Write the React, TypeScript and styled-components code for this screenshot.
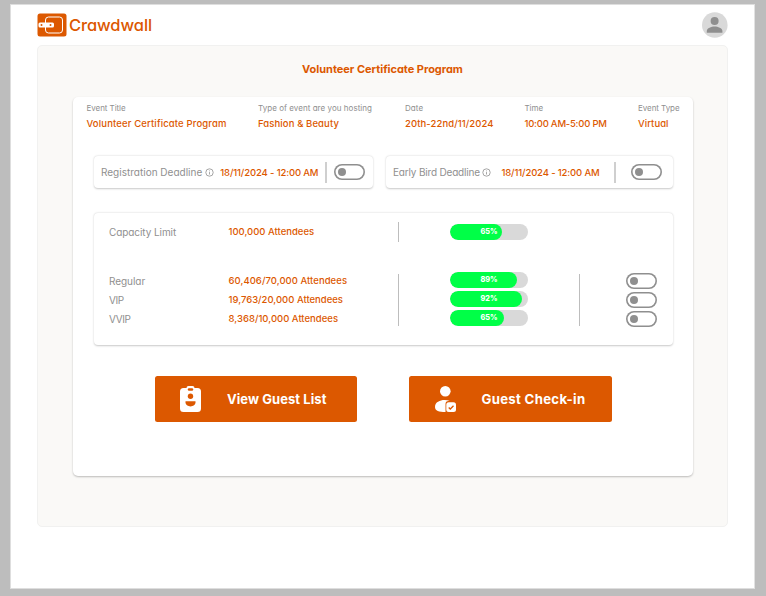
import React from "react";
import styled, { createGlobalStyle } from "styled-components";

const orange = "#dc5800";
const grey = "#8f8f8f";

const Global = createGlobalStyle`
  * { box-sizing: border-box; }
  body { margin: 0; background: #bdbdbd; font-family: Inter, "Open Sans", sans-serif; font-feature-settings: "cv11"; }
`;

const Sheet = styled.div`
  width: 745px; height: 585px; margin: 4px 0 0 10px; background: #fff;
  border: 1px solid #dedede; border-right-color: #e2e2e2;
  padding: 0 26px;
`;
const Header = styled.header`
  height: 40px; display: flex; align-items: center; justify-content: space-between;
`;
const Brand = styled.div`display: flex; align-items: center; gap: 2px;`;
const Panel = styled.main`
  width: 691px; height: 482px; background: #faf9f7; border: 1px solid #f1f1f0; border-radius: 5px;
  display: flex; flex-direction: column; align-items: center;
`;
const TitleBar = styled.div`height: 51px; padding-top: 11px;`;
const Card = styled.section`
  width: 620px; height: 379px; background: #fff; border-radius: 5px;
  box-shadow: 0 1px 2px rgba(0, 0, 0, .25);
  padding: 5px 0 0 14px;
`;
const Txt = styled.span<{ $s?: number; $w?: number; $ls?: number; $c?: string; $lh?: number }>`
  display: inline-block; white-space: nowrap; font-size: ${p => p.$s ?? 9.5}px; font-weight: ${p => p.$w ?? 500};
  letter-spacing: ${p => p.$ls ?? 0}px; color: ${p => p.$c ?? orange}; line-height: ${p => p.$lh ?? 20}px;
`;
const Label = styled(Txt).attrs({ $s: 10, $w: 400, $c: grey })``;
const Facts = styled.div`display: grid; grid-template-columns: 171.5px 147px 119.5px 113.5px auto; height: 54px;`;
const Fact = styled.div`display: flex; flex-direction: column; align-items: flex-start;`;
const Deadlines = styled.div`display: flex; gap: 13px; margin: 0 0 25px 7px;`;
const Raised = styled.div`background: #fff; border-radius: 4px; box-shadow: 0 0.5px 2px rgba(0, 0, 0, .22);`;
const Deadline = styled(Raised)<{ $w: number }>`
  width: ${p => p.$w}px; height: 32px; padding-left: 7.5px; display: flex; align-items: center;
`;
const Rule = styled.i<{ $h: number; $wide?: boolean }>`
  width: ${p => (p.$wide ? 1.5 : 1)}px; height: ${p => p.$h}px; background: ${p => (p.$wide ? "#cfcfcf" : "#bdbdbd")};
  flex: none;
`;
const Toggle = styled.button`
  width: 31px; height: 16px; padding: 0 0 0 4px; border: 0; border-radius: 8px; background: #fff;
  box-shadow: inset 0 0 0 1.6px ${grey};
  display: flex; align-items: center; flex: none;
  &::before { content: ""; width: 8px; height: 8px; border-radius: 50%; background: ${grey}; }
`;
const Info = styled.svg`margin-left: 2.5px; flex: none;`;
const Spacer = styled.div<{ $w: number }>`width: ${p => p.$w}px; flex: none;`;

const Capacity = styled(Raised)`
  width: 579px; height: 132px; margin-left: 7px; padding: 9px 0 0 15.5px;
  display: flex; flex-direction: column; gap: 29px;
`;
const Group = styled.div`
  display: grid; grid-template-columns: 119.5px 169.5px 52px 129px 47px auto; align-items: center;
`;
const Tiers = styled(Group)`
  align-items: start;
  & > ${Rule} { margin-top: 3px; }
`;
const Col = styled.div<{ $top?: number }>`
  display: flex; flex-direction: column; gap: 3px; padding-top: ${p => p.$top ?? 1}px; align-items: flex-start;
`;
const Track = styled.div`
  width: 78px; height: 16px; border-radius: 8px; background: #d9d9d9; display: grid; overflow: hidden; align-items: center;
  & > * { grid-area: 1 / 1; }
`;
const Fill = styled.div<{ $w: number }>`width: ${p => p.$w}px; height: 16px; border-radius: 8px; background: #00ff47;`;
const Pct = styled(Txt)`text-align: center;`;
const Actions = styled.div`display: flex; gap: 52px; margin: 31px 0 0 68px;`;
const Action = styled.button`
  width: 202.5px; height: 46px; border: 0; border-radius: 2.5px; background: ${orange}; padding: 0 0 0 24.5px;
  display: flex; align-items: center; gap: 24px; font-family: inherit; font-feature-settings: inherit;
`;

const InfoIcon = () => (
  <Info width="9" height="9" viewBox="0 0 9 9" fill="none" stroke={grey} strokeWidth=".8">
    <circle cx="4.5" cy="4.5" r="3.7" />
    <path d="M4.5 4.1v2.4M4.5 2.5v.8" />
  </Info>
);

const Bar = ({ fill, label }: { fill: number; label: string }) => (
  <Track>
    <Fill $w={fill} />
    <Pct $s={7.3} $w={800} $c="#fff" $lh={16}>{label}</Pct>
  </Track>
);

const facts: { label: string; labelLs: number; value: string; valueLs: number }[] = [
  { label: "Event Title", labelLs: -0.06, value: "Volunteer Certificate Program", valueLs: 0.14 },
  { label: "Type of event are you hosting", labelLs: 0.04, value: "Fashion & Beauty", valueLs: 0.1 },
  { label: "Date", labelLs: 0.1, value: "20th-22nd/11/2024", valueLs: 0.07 },
  { label: "Time", labelLs: -0.05, value: "10:00 AM-5:00 PM", valueLs: -0.23 },
  { label: "Event Type", labelLs: -0.06, value: "Virtual", valueLs: 0.045 },
];

export default function App() {
  return (
    <>
      <Global />
      <Sheet>
        <Header>
          <Brand>
            <svg width="30" height="24" viewBox="0 0 30 24" fill="none">
              <rect x=".5" y=".5" width="29" height="23" rx="2.5" fill={orange} />
              <rect x="8.5" y="4" width="17" height="16" rx="3" stroke="#fff" strokeWidth="1" />
              <rect x="1.5" y="9.5" width="15.5" height="5" rx="1.5" fill="#fff" />
              <circle cx="4.5" cy="12" r="1" fill={orange} />
              <circle cx="13.5" cy="12" r="1" fill={orange} />
            </svg>
            <Txt $s={16.5} $ls={-0.1} $lh={22}>Crawdwall</Txt>
          </Brand>
          <svg width="26" height="26" viewBox="0 0 26 26">
            <circle cx="12.800" cy="13" r="12.800" fill="#d9d9d9" />
            <circle cx="12.600" cy="9" r="4" fill={grey} />
            <path d="M4.800 20.700v-1.600c0-3 4.600-4.600 7.800-4.600s7.800 1.600 7.800 4.600v1.600z" fill={grey} />
          </svg>
        </Header>
        <Panel>
          <TitleBar><Txt $s={11} $w={650} $ls={-0.03}>Volunteer Certificate Program</Txt></TitleBar>
          <Card>
            <Facts>
              {facts.map(f => (
                <Fact key={f.label}>
                  <Txt $s={8} $w={400} $ls={f.labelLs} $c={grey} $lh={12}>{f.label}</Txt>
                  <Txt $ls={f.valueLs}>{f.value}</Txt>
                </Fact>
              ))}
            </Facts>
            <Deadlines>
              <Deadline $w={279}>
                <Label $lh={21}>Registration Deadline</Label><InfoIcon /><Spacer $w={6.5} />
                <Txt $ls={-0.14} $lh={21}>18/11/2024 - 12:00 AM</Txt>
                <Spacer $w={7} /><Rule $h={21} $wide /><Spacer $w={7} /><Toggle />
              </Deadline>
              <Deadline $w={287}>
                <Label $ls={-0.18} $lh={21}>Early Bird Deadline</Label><InfoIcon /><Spacer $w={10} />
                <Txt $ls={-0.14} $lh={21}>18/11/2024 - 12:00 AM</Txt>
                <Spacer $w={14.5} /><Rule $h={21} $wide /><Spacer $w={15.5} /><Toggle />
              </Deadline>
            </Deadlines>
            <Capacity>
              <Group>
                <Label $ls={-0.08}>Capacity Limit</Label>
                <Txt>100,000 Attendees</Txt>
                <Rule $h={20} />
                <Bar fill={52} label="65%" />
              </Group>
              <Tiers>
                <Col $top={2}>
                  <Label $ls={-0.05} $lh={16}>Regular</Label>
                  <Label $ls={-0.4} $lh={16}>VIP</Label>
                  <Label $ls={-0.4} $lh={16}>VVIP</Label>
                </Col>
                <Col $top={1.5}>
                  <Txt $ls={0.05} $lh={16}>60,406/70,000 Attendees</Txt>
                  <Txt $lh={16}>19,763/20,000 Attendees</Txt>
                  <Txt $ls={0.01} $lh={16}>8,368/10,000 Attendees</Txt>
                </Col>
                <Rule $h={52} />
                <Col><Bar fill={67} label="89%" /><Bar fill={72} label="92%" /><Bar fill={54} label="65%" /></Col>
                <Rule $h={52} />
                <Col $top={1.5}><Toggle /><Toggle /><Toggle /></Col>
              </Tiers>
            </Capacity>
            <Actions>
              <Action>
                <svg width="24" height="28" viewBox="0 0 24 28">
                  <path d="M4.500 3H7.500a2 2 0 0 1 2-2h4a2 2 0 0 1 2 2H18.500a3.500 3.500 0 0 1 3.500 3.500v17a3.500 3.500 0 0 1-3.500 3.500h-14a3.500 3.500 0 0 1-3.500-3.500v-17A3.500 3.500 0 0 1 4.500 3z" fill="#fff" />
                  <rect x="8.800" y="3.200" width="5.400" height="2.600" rx="1.200" fill={orange} />
                  <circle cx="11.500" cy="11.200" r="2.700" fill={orange} />
                  <path d="M6.500 16.300h10v1c0 5.500-10 5.500-10 0z" fill={orange} />
                </svg>
                <Txt $s={13} $w={700} $ls={0.06} $c="#fff">View Guest List</Txt>
              </Action>
              <Action>
                <svg width="24" height="28" viewBox="0 0 24 28">
                  <circle cx="11.300" cy="6.300" r="5.300" fill="#fff" />
                  <path d="M1 22c0-5 5-7 9.500-7 2 0 3.800.3 5.300 1h-1.300a3 3 0 0 0-3 3v8C5 27 1 26 1 22z" fill="#fff" />
                  <rect x="12.300" y="17.300" width="9.700" height="9.700" rx="2.500" fill="#fff" />
                  <path d="M14.700 22.500l1.600 1.500 3.200-3.200" fill="none" stroke={orange} strokeWidth="1.300" />
                </svg>
                <Txt $s={13.2} $w={700} $ls={0.3} $c="#fff">Guest Check-in</Txt>
              </Action>
            </Actions>
          </Card>
        </Panel>
      </Sheet>
    </>
  );
}
